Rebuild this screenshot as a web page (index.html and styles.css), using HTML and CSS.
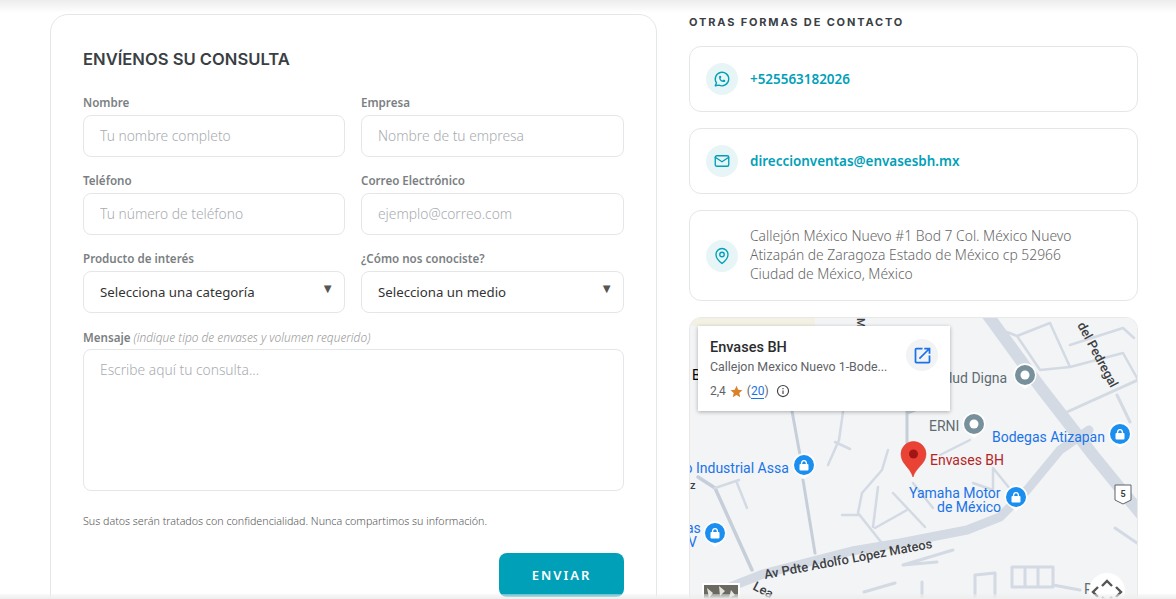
FILE: index.html
```html
<!DOCTYPE html>
<html lang="es">
  <head>
    <meta charset="UTF-8" />
    <meta name="viewport" content="width=device-width, initial-scale=1.0" />
    <title>Contacto</title>
    <link rel="stylesheet" href="styles.css">
  </head>
  <body>
    <div class="shade-top"></div>
    <main class="contact">
      <form class="form-card">
        <h2>ENVÍENOS SU CONSULTA</h2>
        <div class="form-grid">
          <div class="field">
            <label>Nombre</label>
            <input type="text" placeholder="Tu nombre completo" />
          </div>
          <div class="field">
            <label>Empresa</label>
            <input type="text" placeholder="Nombre de tu empresa" />
          </div>
          <div class="field">
            <label>Teléfono</label>
            <input type="text" placeholder="Tu número de teléfono" />
          </div>
          <div class="field">
            <label>Correo Electrónico</label>
            <input type="text" placeholder="ejemplo@correo.com" />
          </div>
          <div class="field">
            <label>Producto de interés</label>
            <div class="select-wrap">
              <select><option>Selecciona una categoría</option></select>
            </div>
          </div>
          <div class="field">
            <label>¿Cómo nos conociste?</label>
            <div class="select-wrap">
              <select><option>Selecciona un medio</option></select>
            </div>
          </div>
          <div class="field field-wide">
            <label>Mensaje <em>(indique tipo de envases y volumen requerido)</em></label>
            <textarea placeholder="Escribe aquí tu consulta..."></textarea>
          </div>
        </div>
        <p class="privacy">Sus datos serán tratados con confidencialidad. Nunca compartimos su información.</p>
        <div class="form-actions">
          <button type="button">ENVIAR</button>
        </div>
      </form>

      <section class="side">
        <h3>OTRAS FORMAS DE CONTACTO</h3>
        <a class="info-card">
          <span class="icon-dot">
            <svg viewBox="0 0 24 24"><path d="M3 21l1.65-3.8a9 9 0 1 1 3.4 2.9L3 21" /><path d="M9 10a.5.5 0 0 0 1 0V9a.5.5 0 0 0-1 0v1a5 5 0 0 0 5 5h1a.5.5 0 0 0 0-1h-1a.5.5 0 0 0 0 1" /></svg>
          </span>
          <span class="info-link">+525563182026</span>
        </a>
        <a class="info-card">
          <span class="icon-dot">
            <svg viewBox="0 0 24 24"><rect x="3" y="5" width="18" height="14" rx="2" /><path d="M3 7l9 6 9-6" /></svg>
          </span>
          <span class="info-link">direccionventas@envasesbh.mx</span>
        </a>
        <div class="info-card">
          <span class="icon-dot">
            <svg viewBox="0 0 24 24"><path d="M20 10c0 6-8 12-8 12s-8-6-8-12a8 8 0 0 1 16 0z" /><circle cx="12" cy="10" r="3" /></svg>
          </span>
          <span class="info-text">Callejón México Nuevo #1 Bod 7 Col. México Nuevo<br>Atizapán de Zaragoza Estado de México cp 52966<br>Ciudad de México, México</span>
        </div>

        <div class="map">
          <svg class="map-canvas" viewBox="0 0 449 300" width="449" height="300">
            <defs>
              <g id="pin-grey">
                <path d="M0 14 L-8 8 A11.500 11.500 0 1 1 8 8 Z" fill="#fff" />
                <circle r="10" fill="#78909c" />
                <circle r="4.500" fill="#fff" />
              </g>
              <g id="pin-shop">
                <path d="M0 14 L-8 8 A11.500 11.500 0 1 1 8 8 Z" fill="#fff" />
                <circle r="10" fill="#1a8ff0" />
                <path d="M-2.500 -1 a2.500 3.400 0 0 1 5 0" fill="none" stroke="#fff" stroke-width="1.300" />
                <rect x="-4.500" y="-1" width="9" height="6.500" rx="1" fill="#fff" />
              </g>
            </defs>
            <rect width="449" height="300" fill="#f3f4f6" />
            <rect width="126" height="8" fill="#f3f1e4" />

            <g fill="none" stroke="#d3dae3" stroke-linejoin="round" stroke-linecap="round">
              <!-- main roads -->
              <path stroke-width="12" d="M298 -4 L352 70 L404 137 L452 196" />
              <path stroke-width="9" d="M36 271 L74 256 L163 233 L211 225 L278 212 L311 199 L338 172 L371 132 L400 112" />
              <!-- side streets -->
              <path stroke-width="3.500" stroke="#c6cfd9" d="M9 159 L26 170 L63 252" />
              <path stroke-width="2.500" d="M26 170 L50 162 M48 165 L58 190" />
              <path stroke-width="3" stroke="#c6cfd9" d="M103 93 L111 137 M114 162 L126 235" />
              <path stroke-width="2.500" d="M154 94 L150 122 L139 147 M146 124 L161 131" />
              <path stroke-width="3" stroke="#c6cfd9" d="M218 93 L218 125 M218 95 L226 92" />
              <path stroke-width="2.500" d="M251 137 L281 122" />
              <path stroke-width="2.500" d="M199 132 L193 152 L173 175 L169 195 L196 229 M153 197 L169 197 M189 169 L184 209 M186 210 L218 192 M204 175 L236 209" />
              <path stroke-width="2.500" d="M224 165 L244 190 M284 165 L304 172 L304 150 L326 177" />
              <path stroke-width="2.500" d="M318 14 L328 18 L361 5 L381 49 L434 35 L448 60 M328 18 L351 52 L381 49 M381 27 L434 10 L445 20" />
              <path stroke-width="3" d="M378 94 L449 62 M428 77 L441 104" />
              <path stroke-width="3" d="M323 249 H364 V269 H323 Z M336 249 V269 M349 249 V269 M364 267 L391 272" />
              <path stroke-width="3" d="M286 281 V257 L306 255 V281 M214 247 L264 232 M214 247 L248 244 M233 264 V282 M175 274 L206 265 M426 210 L448 225" />
            </g>

            <g class="map-label">
              <text x="3" y="62">B</text>
              <text x="244" y="65" class="grey">Salud Digna</text>
              <text x="240" y="113" class="grey">ERNI</text>
              <text x="303" y="124" class="blue">Bodegas Atizapan</text>
              <text x="241" y="147" class="red">Envases BH</text>
              <text x="220" y="180" class="blue">Yamaha Motor</text>
              <text x="248" y="194" class="blue">de México</text>
              <text x="-4.500" y="155" class="blue">o Industrial Assa</text>
              <text x="-3" y="215" class="blue">as</text>
              <text x="-1" y="229" class="blue">V</text>
              <text x="1" y="171" class="road small">z</text>
              <text x="395" y="276" class="grey">R</text>
              <text transform="translate(76 261) rotate(-10.500)" class="road">Av Pdte Adolfo López Mateos</text>
              <text transform="translate(388 7) rotate(62)" class="road">del Pedregal</text>
              <text transform="translate(168 0) rotate(90)" class="road small">M</text>
              <text transform="translate(63 271) rotate(28)" class="road">Lea</text>
            </g>

            <use href="#pin-grey" x="336" y="57" />
            <use href="#pin-grey" x="285" y="106" />
            <use href="#pin-shop" x="431" y="116" />
            <use href="#pin-shop" x="115" y="147" />
            <use href="#pin-shop" x="26" y="215" />
            <use href="#pin-shop" x="327" y="179" />

            <path d="M224 159 C221 149 212 146 212 136 A12.500 12.500 0 1 1 237 136 C237 146 227 149 224 159 Z" fill="#ea4335" stroke="#d33a2c" stroke-width=".6" />
            <circle cx="224.500" cy="136" r="4.500" fill="#a31515" />

            <path d="M426 167 H442 V182 L434 186 L426 182 Z" fill="#fff" stroke="#5f6368" stroke-width="1" />
            <text x="434" y="179" class="shield">5</text>

            <rect x="13" y="265" width="38" height="40" fill="#fff" />
            <rect x="15" y="267" width="34" height="36" fill="#6a6a62" />
            <path d="M18 270 l6 5 l-4 5 z M30 268 l6 5 l-5 5 z M42 272 l4 5 l-6 3 z M20 284 l7 3 l-5 5 z" fill="#e4e4dc" />

            <circle cx="418" cy="273" r="18" fill="#fff" />
            <path d="M413 268 L418 263 L423 268 M413 279 L418 284 L423 279 M409 269 L404 274 L409 279 M427 269 L432 274 L427 279" fill="none" stroke="#555" stroke-width="2.400" />
          </svg>

          <div class="place-card">
            <div class="place-main">
              <div class="place-name">Envases BH</div>
              <div class="place-address">Callejon Mexico Nuevo 1-Bode...</div>
              <div class="place-rating">
                <span>2,4</span>
                <svg class="star" viewBox="0 0 24 24"><path d="M12 1.500l3.200 7.300 7.800.7-5.900 5.200 1.800 7.800L12 18.400l-6.900 4.100 1.800-7.800L1 9.500l7.800-.7z" /></svg>
                <span>(<a>20</a>)</span>
                <svg class="info" viewBox="0 0 24 24"><circle cx="12" cy="12" r="9.500" /><path d="M12 11v6M12 7v2" /></svg>
              </div>
            </div>
            <span class="place-open">
              <svg viewBox="0 0 24 24"><path d="M19 19H5V5h7V3H5a2 2 0 0 0-2 2v14a2 2 0 0 0 2 2h14a2 2 0 0 0 2-2v-7h-2v7zM14 3v2h3.590l-9.830 9.830 1.410 1.410L19 6.410V10h2V3h-7z" /></svg>
            </span>
          </div>
        </div>
      </section>
    </main>
    <div class="shade-bottom"></div>
  </body>
</html>
```

FILE: styles.css
```css
* {
  margin: 0;
  padding: 0;
  box-sizing: border-box;
}
html,
body {
  height: 100%;
  overflow: hidden;
}
body {
  font-family: "Noto Sans", "Open Sans", sans-serif;
  background-color: #fff;
  color: #333;
}
.shade-top {
  position: fixed;
  top: 0;
  left: 0;
  right: 0;
  height: 13px;
  background: linear-gradient(#ededed, #fff);
  z-index: 5;
}
.shade-bottom {
  position: fixed;
  bottom: 0;
  left: 0;
  right: 0;
  height: 5px;
  background: linear-gradient(rgba(240, 240, 240, 0.4), #eee);
  z-index: 5;
}
.contact {
  display: grid;
  grid-template-columns: 607px 449px;
  gap: 32px;
  padding: 14px 38px 0 50px;
  align-items: start;
}

/* form */
.form-card {
  border: 1px solid #e4e6e8;
  border-radius: 18px;
  padding: 32px;
  background-color: #fff;
}
.form-card h2 {
  font-family: Inter, sans-serif;
  font-size: 16.6px;
  font-weight: 600;
  line-height: 25px;
  color: #3a3f44;
  margin-bottom: 23px;
}
.form-grid {
  display: grid;
  grid-template-columns: 262px 263px;
  gap: 16px;
}
.field label {
  display: block;
  height: 16px;
  font-size: 11.6px;
  font-weight: 600;
  line-height: 16px;
  color: #7b7f83;
  margin-bottom: 4px;
}
.field label em {
  font-weight: 300;
  font-size: 11.9px;
  color: #999;
}
.field-wide {
  grid-column: 1 / 3;
}
.field input,
.field select,
.field textarea {
  display: block;
  width: 100%;
  height: 42px;
  border: 1px solid #e4e6e8;
  border-radius: 8px;
  padding: 0 16px;
  font-family: inherit;
  font-size: 13.8px;
  font-weight: 300;
  color: #333;
  background-color: #fff;
  outline: none;
}
.field input {
  padding-bottom: 2px;
}
.field input::placeholder,
.field textarea::placeholder {
  color: #a8acb0;
  opacity: 1;
}
.field select {
  appearance: none;
  font-size: 13.25px;
  font-weight: 400;
}
.select-wrap {
  position: relative;
}
.select-wrap::after {
  content: "▼";
  position: absolute;
  top: 9px;
  right: 11px;
  font-size: 13px;
  line-height: 16px;
  color: #555;
}
.field textarea {
  height: 142px;
  padding: 10px 16px;
  resize: none;
}
.privacy {
  font-size: 10.7px;
  font-weight: 300;
  line-height: 14px;
  color: #555;
  margin-top: 23px;
}
.form-actions {
  display: flex;
  justify-content: flex-end;
  margin-top: 25px;
}
.form-actions button {
  width: 125px;
  height: 44px;
  border: 0;
  border-radius: 8px;
  background-color: #00a0b8;
  color: #fff;
  font-family: inherit;
  font-size: 13px;
  font-weight: 600;
  letter-spacing: 2px;
}

/* side column */
.side h3 {
  font-family: Inter, sans-serif;
  font-size: 11px;
  font-weight: 700;
  line-height: 16px;
  letter-spacing: 1.85px;
  color: #3a3f44;
  margin-bottom: 16px;
}
.info-card {
  display: flex;
  align-items: center;
  gap: 12px;
  border: 1px solid #e4e6e8;
  border-radius: 12px;
  padding: 16px;
  margin-bottom: 16px;
}
.icon-dot {
  flex: none;
  width: 32px;
  height: 32px;
  border-radius: 50%;
  background-color: #e8f5f7;
  display: flex;
  align-items: center;
  justify-content: center;
}
.icon-dot svg {
  width: 18px;
  height: 18px;
  fill: none;
  stroke: #00a0b8;
  stroke-width: 1.8;
  stroke-linecap: round;
  stroke-linejoin: round;
}
.info-link {
  font-size: 13.45px;
  font-weight: 600;
  color: #00a0b8;
}
.info-text {
  font-size: 13.85px;
  font-weight: 300;
  line-height: 19px;
  margin: -1px 0 1px;
  color: #666;
}

/* map */
.map {
  position: relative;
  height: 300px;
  border-radius: 12px 12px 0 0;
  overflow: hidden;
  border: 1px solid #e8e8e8;
  margin-top: 16px;
}
.map-canvas {
  display: block;
  margin: 0 -1px;
  font-family: Roboto, sans-serif;
}
.map-label text {
  font-size: 14px;
}
.map-label .grey {
  fill: #5f6c72;
}
.map-label .blue {
  fill: #1a73e8;
}
.map-label .red {
  fill: #b3261e;
}
.map-label .road {
  fill: #3c4043;
  font-weight: 500;
  font-size: 12.9px;
}
.map-label .small {
  font-size: 11px;
}
.shield {
  font-size: 9px;
  font-weight: 700;
  fill: #3c4043;
  text-anchor: middle;
}
.place-card {
  position: absolute;
  top: 8px;
  left: 8px;
  width: 252px;
  height: 85px;
  background-color: #fff;
  box-shadow: 0 1px 4px rgba(0, 0, 0, 0.3);
  padding: 13px 12px 12px;
  display: flex;
  justify-content: space-between;
  font-family: Roboto, sans-serif;
}
.place-name {
  font-size: 14.5px;
  font-weight: 500;
  line-height: 18px;
  color: #2b2c2e;
}
.place-address {
  font-size: 12.4px;
  line-height: 16px;
  margin-top: 2px;
  color: #5f6368;
}
.place-rating {
  display: flex;
  align-items: center;
  gap: 4px;
  font-size: 12px;
  line-height: 16px;
  margin-top: 8px;
  color: #5f6368;
}
.place-rating a {
  color: #1a73e8;
  border-bottom: 1px solid #1a73e8;
}
.place-rating .star {
  width: 13px;
  height: 13px;
  fill: #d9822b;
}
.place-rating .info {
  width: 14px;
  height: 14px;
  margin-left: 3px;
  fill: none;
  stroke: #444;
  stroke-width: 2;
}
.place-open {
  flex: none;
  width: 32px;
  height: 32px;
  border-radius: 50%;
  background-color: #f1f3f4;
  display: flex;
  align-items: center;
  justify-content: center;
}
.place-open svg {
  width: 21px;
  height: 21px;
  fill: #1a73e8;
}
```
